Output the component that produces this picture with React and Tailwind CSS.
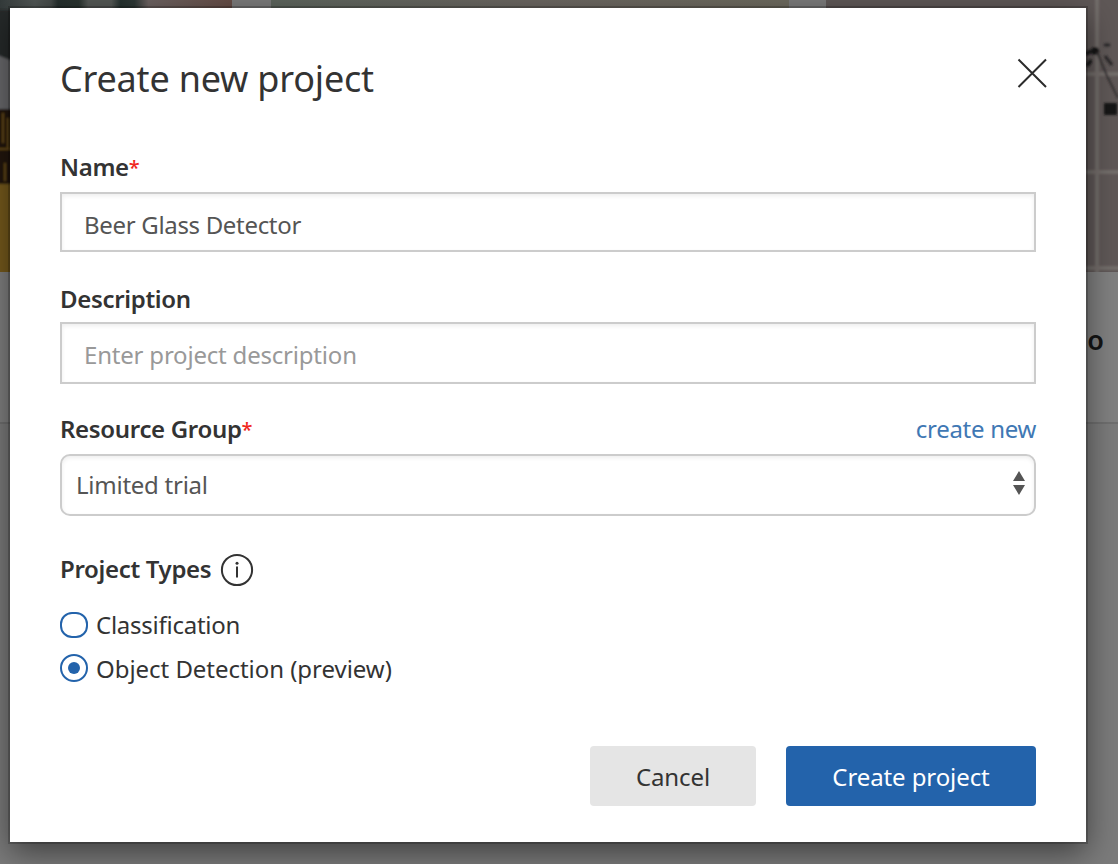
function Backdrop() {
  return (
    <div className="flex h-full flex-col overflow-hidden bg-[#7b7b7b]" aria-hidden="true">
      <div className="flex h-[424px] shrink-0 border-b-2 border-[#6f6f6f]">
        <div className="w-[232px] shrink-0 bg-[#808080]">
          <svg className="block h-[272px] w-[232px]" viewBox="0 0 232 272">
            <defs>
              <filter id="soft" filterUnits="userSpaceOnUse" x="-20" y="-20" width="1200" height="320">
                <feGaussianBlur stdDeviation="1.3" />
              </filter>
              <linearGradient id="photoTop" x1="0" x2="1">
                <stop offset="0" stopColor="#343b3b" />
                <stop offset="0.15" stopColor="#525856" />
                <stop offset="0.22" stopColor="#454b49" />
                <stop offset="0.25" stopColor="#26302e" />
                <stop offset="0.34" stopColor="#29332f" />
                <stop offset="0.38" stopColor="#545855" />
                <stop offset="0.48" stopColor="#545855" />
                <stop offset="0.52" stopColor="#263230" />
                <stop offset="0.58" stopColor="#2e3836" />
                <stop offset="0.64" stopColor="#6c6261" />
                <stop offset="1" stopColor="#664d46" />
              </linearGradient>
            </defs>
            <rect width="232" height="272" fill="url(#photoTop)" />
            <g filter="url(#soft)">
              <path d="M-5 10H20V64L-5 54Z" fill="#252c2c" />
              <path d="M-5 54L20 64V110H-5Z" fill="#69696c" />
              <rect x="-5" y="109" width="30" height="75" fill="#211809" />
              <path d="M3 113V143M8 118V150M-2 149H12M5 163V181" stroke="#654813" strokeWidth="2" />
              <rect x="-5" y="184" width="30" height="100" fill="#765a1e" />
            </g>
          </svg>
        </div>
        <div className="ml-[39px] w-[518px] shrink-0 bg-[#808080]">
          <div className="h-[272px] bg-linear-to-r from-[#5d655d] via-[#6b6661] to-[#6d6a5e]" />
        </div>
        <div className="ml-[37px] w-[292px] shrink-0 bg-[#808080]">
          <svg className="block h-[272px] w-[292px]" viewBox="826 0 292 272">
            <rect x="826" width="292" height="272" fill="#5f5857" />
            <g filter="url(#soft)">
              <path d="M1097 -5V280M1080 74H1125M1080 172H1125M1080 268H1125" stroke="#736d6b" strokeWidth="4" fill="none" />
              <path d="M1086 54L1091 51M1087 66L1091 60" stroke="#191718" strokeWidth="4" fill="none" />
              <circle cx="1095" cy="51" r="4" fill="#191718" />
              <path d="M1104 45H1110M1105 56L1112 65" stroke="#2b2829" strokeWidth="3" fill="none" />
              <path d="M1097 52L1107 76L1118 98" stroke="#353132" strokeWidth="2" fill="none" />
              <rect x="1104" y="103" width="13" height="12" fill="#191718" />
            </g>
          </svg>
          <div className="flex h-[136px] items-center justify-end pr-[14px] text-[27px] font-semibold text-[#151515]">o</div>
        </div>
      </div>
    </div>
  );
}

function Required() {
  return <span className="align-[1px] text-[20px] leading-none font-medium text-[#f0281e]">*</span>;
}

const inputClass =
  "block w-full border-2 border-[#cccccc] bg-white px-[22px] text-[24px] text-[#555555] shadow-[inset_0_2px_4px_rgba(0,0,0,0.07)] outline-none placeholder:tracking-[-0.2px] placeholder:text-[#999999] placeholder:opacity-100";
const labelClass = "text-[24px] leading-[34px] font-semibold tracking-[-0.33px] text-[#333333]";

export default function App() {
  return (
    <div className="relative h-[864px] w-[1118px] overflow-hidden font-['Noto_Sans','Open_Sans',sans-serif]">
      <Backdrop />
      <div
        role="dialog"
        aria-label="Create new project"
        className="absolute top-2 left-[10px] h-[834px] w-[1076px] bg-white px-[50px] text-[24px] text-[#333333] shadow-[0_0_0_2px_rgba(0,0,0,0.2),0_10px_30px_rgba(0,0,0,0.5)]"
      >
        <header className="flex h-[142px] justify-between pt-[46px]">
          <h1 className="text-[36px] leading-[50px] tracking-[-0.2px]">Create new project</h1>
          <button type="button" aria-label="Close" className="-mr-3 mt-1 h-8 w-8">
            <svg viewBox="0 0 32 32" className="h-8 w-8" fill="none" stroke="#2b2b2b" strokeWidth="2">
              <path d="M2.5 1.5L30 29M30 1.5L2.5 29" />
            </svg>
          </button>
        </header>

        <form className="flex flex-col">
          <label className={`${labelClass} h-[34px]`} htmlFor="name">
            Name<Required />
          </label>
          <input id="name" className={`${inputClass} mt-2 h-[60px] pt-1 tracking-[-0.32px]`} defaultValue="Beer Glass Detector" />

          <label className={`${labelClass} mt-[30px]`} htmlFor="description">Description</label>
          <input id="description" className={`${inputClass} mt-[6px] h-[62px] pt-0.5`} placeholder="Enter project description" />

          <div className="mt-7 flex h-[34px] items-center justify-between">
            <span className={labelClass}>
              Resource Group<Required />
            </span>
            <a className="leading-[34px] tracking-[-0.3px] text-[#4078b4]">create new</a>
          </div>
          <div className="mt-2 flex h-[62px] items-center justify-between rounded-[10px] border-2 border-[#cccccc] pr-[9px] pl-[14px] text-[#555555] shadow-[inset_0_2px_4px_rgba(0,0,0,0.07)]">
            <span className="tracking-[-0.25px]">Limited trial</span>
            <svg viewBox="0 0 12 24" className="-mt-1 h-6 w-3" fill="#555555">
              <path d="M6 0L12 10H0ZM0 14H12L6 24Z" />
            </svg>
          </div>

          <div className="mt-9 flex h-9 items-center gap-[9px]">
            <span className={`${labelClass} -mt-0.5`}>Project Types</span>
            <svg viewBox="0 0 34 34" className="h-[34px] w-[34px]" fill="none" stroke="#333333">
              <circle cx="17" cy="17" r="15.1" strokeWidth="2" />
              <path d="M17 13.5V24.5" strokeWidth="2" />
              <circle cx="17" cy="10.3" r="1.5" fill="#333333" stroke="none" />
            </svg>
          </div>

          <label className="mt-[15px] flex h-11 items-center gap-2 tracking-[-0.25px]">
            <span className="h-[26px] w-7 rounded-[12px] border-2 border-[#2363ab]" />
            Classification
          </label>
          <label className="flex h-11 items-center gap-2 tracking-[-0.04px]">
            <span className="-mt-0.5 flex h-7 w-7 items-center justify-center rounded-full border-2 border-[#2363ab]">
              <span className="h-3 w-3 rounded-full bg-[#2363ab]" />
            </span>
            Object Detection (preview)
          </label>

          <div className="mt-[55px] flex justify-end gap-[30px]">
            <button type="button" className="h-[60px] w-[166px] rounded-[4px] bg-[#e5e5e5] pt-0.5 tracking-[-0.1px]">Cancel</button>
            <button type="button" className="h-[60px] w-[250px] rounded-[4px] bg-[#2363ab] pt-0.5 tracking-[-0.1px] text-white">Create project</button>
          </div>
        </form>
      </div>
    </div>
  );
}
